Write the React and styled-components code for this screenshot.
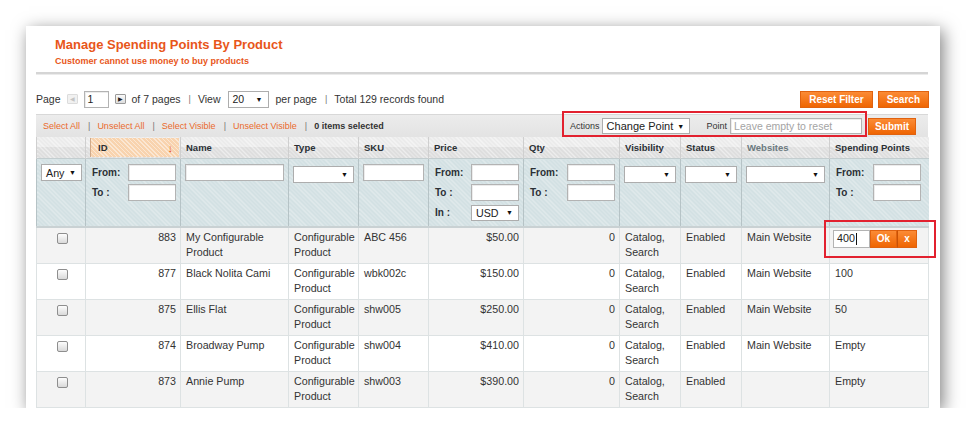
import React from 'react';
import styled, { createGlobalStyle } from 'styled-components';

const GlobalStyle = createGlobalStyle`
  html, body { margin: 0; padding: 0; background: #fff; }
  body { font-family: "Liberation Sans", Arial, sans-serif; color: #333; }
  * { box-sizing: border-box; }
`;

const ORANGE = '#e8561a';
const hatch = (light) =>
  `repeating-linear-gradient(45deg, ${light} 0 1px, transparent 1px 3px)`;

const Page = styled.div`
  padding: 26px 0 0 26px;
`;

const Panel = styled.div`
  width: 914px;
  height: 382px;
  background: #fff;
  box-shadow: 3px 4px 16px rgba(0, 0, 0, 0.5);
  overflow: hidden;
  padding: 0 12px 0 10px;
`;

const Head = styled.div`
  padding: 11px 0 0 19px;
  height: 46px;
`;

const Title = styled.h3`
  margin: 0;
  font-size: 13px;
  line-height: 16px;
  font-weight: bold;
  color: ${ORANGE};
`;

const Subtitle = styled.div`
  margin-top: 3px;
  font-size: 9px;
  line-height: 11px;
  font-weight: bold;
  color: ${ORANGE};
`;

const Rule = styled.div`
  height: 3px;
  background: #d5d5d5;
  border-bottom: 1px solid #ebebeb;
`;

const Toolbar = styled.div`
  display: flex;
  align-items: center;
  justify-content: space-between;
  height: 18px;
  margin-top: 15px;
  font-size: 10.5px;
  color: #333;
`;

const Pager = styled.div`
  display: flex;
  align-items: center;
`;

const Spacer = styled.span`
  width: ${(p) => p.$w}px;
`;

const ArrowBox = styled.span`
  display: inline-flex;
  align-items: center;
  justify-content: center;
  width: 11px;
  height: 10px;
  margin: 0 6px;
  border: 1px solid ${(p) => (p.$disabled ? '#dcdcdc' : '#9a9a9a')};
  background: ${(p) => (p.$disabled ? '#f1f1f1' : 'linear-gradient(#fafafa, #dedede)')};
  color: ${(p) => (p.$disabled ? '#c4c4c4' : '#222')};
  font-size: 6px;
  line-height: 1;
  border-radius: 1px;
`;

const TextBox = styled.span`
  display: inline-flex;
  align-items: center;
  width: ${(p) => p.$w}px;
  height: ${(p) => p.$h || 17}px;
  padding-left: 3px;
  background: #fff;
  border: 1px solid #b3b3b3;
  box-shadow: inset 1px 1px 0 #ececec;
  font-size: ${(p) => p.$fs || 10.7}px;
  font-weight: normal;
  color: ${(p) => (p.$placeholder ? '#a4a4a4' : '#222')};
  white-space: nowrap;
  overflow: hidden;
`;

const SelectBox = styled.span`
  display: inline-flex;
  align-items: center;
  justify-content: space-between;
  width: ${(p) => (p.$w ? `${p.$w}px` : '100%')};
  height: ${(p) => p.$h || 17}px;
  padding: 0 5px 0 4px;
  background: #fff;
  border: 1px solid #adadad;
  font-size: ${(p) => p.$fs || 10.7}px;
  font-weight: normal;
  color: #222;
  white-space: nowrap;
`;

const Caret = styled.span`
  font-size: 7px;
  color: #111;
  margin-left: 4px;
`;

const Sep = styled.span`
  margin: 0 7px 0 8px;
  color: #777;
  font-size: ${(p) => p.$fs || 9}px;
`;

const Btn = styled.button`
  height: 17px;
  padding: 0 ${(p) => p.$px ?? 8}px;
  margin-left: ${(p) => p.$ml || 0}px;
  border: 1px solid #e0620f;
  background: linear-gradient(#fb8b35, #ef6502);
  color: #fff;
  font-family: "Liberation Sans", Arial, sans-serif;
  font-size: 10px;
  font-weight: bold;
  line-height: 15px;
  cursor: pointer;
`;

const Buttons = styled.div`
  display: flex;
  gap: 5px;
  margin-right: -1px;
`;

const MassBar = styled.div`
  display: flex;
  align-items: center;
  height: 23px;
  margin-top: 6px;
  padding: 0 12px 0 7px;
  background: linear-gradient(#ececec, #e3e3e3);
  border-top: 1px solid #d8d8d8;
  font-size: 9px;
`;

const MassLink = styled.a`
  color: #ea6a2c;
  text-decoration: none;
`;

const Count = styled.strong`
  color: #333;
`;

const Annotated = styled.div`
  position: relative;
  display: flex;
  align-items: center;
  height: 16px;
  margin-left: auto;
`;

const Highlight = styled.span`
  position: absolute;
  pointer-events: none;
  top: ${(p) => p.$t}px;
  right: ${(p) => p.$r}px;
  bottom: ${(p) => p.$b}px;
  left: ${(p) => p.$l}px;
  border: 2px solid #e2212f;
`;

const SmallLabel = styled.span`
  font-size: 9px;
  color: #333;
  margin: ${(p) => p.$m || '0 2px 0 0'};
`;

const Grid = styled.table`
  width: 892px;
  table-layout: fixed;
  border-collapse: collapse;
  font-size: 10.7px;
`;

const HeadCell = styled.th`
  height: 21px;
  padding: 1px 1px 1px 4px;
  text-align: left;
  vertical-align: middle;
  background: ${hatch('rgba(255,255,255,0.45)')},
    linear-gradient(#ebebeb 0, #ebebeb 50%, #dedede 50%, #dedede 100%);
  border-left: 1px solid #cfcfcf;
  font-size: 9.5px;
  font-weight: bold;
  color: ${(p) => (p.$muted ? '#6c7a80' : '#2b3035')};
`;

const HeadLabel = styled.span`
  display: flex;
  align-items: center;
  justify-content: space-between;
  height: 19px;
  padding: 0 6px 0 ${(p) => (p.$sorted ? 7 : 1)}px;
  background: ${(p) =>
    p.$sorted ? `${hatch('rgba(255,255,255,0.45)')}, #f8d3ae` : 'transparent'};
  border-left: ${(p) => (p.$sorted ? '1px solid #cfa98a' : 'none')};
`;

const SortArrow = styled.span`
  color: ${ORANGE};
  font-size: 11px;
  font-weight: normal;
`;

const FilterRow = styled.tr`
  height: 68px;
`;

const FilterCell = styled.td`
  vertical-align: top;
  padding: 5px ${(p) => p.$pr || 4}px 0 4px;
  background: ${hatch('rgba(255,255,255,0.35)')}, #d2e0e3;
  border-left: 1px solid #b6c3c6;
  border-top: 1px solid #c3cdcf;
  border-bottom: 2px solid #c9d1d3;
`;

const RangeRow = styled.div`
  display: flex;
  align-items: center;
  justify-content: space-between;
  height: 17px;
  margin-bottom: 3px;
  padding-left: 2px;
  font-size: 10px;
  font-weight: bold;
  color: #2b3035;
`;

const Row = styled.tr`
  background: ${(p) => (p.$odd ? '#f3f3f3' : '#fff')};
`;

const Cell = styled.td`
  vertical-align: top;
  height: 35px;
  padding: 2px ${(p) => (p.$right ? 4 : 3)}px 3px 5px;
  line-height: 15px;
  text-align: ${(p) => (p.$right ? 'right' : p.$center ? 'center' : 'left')};
  border: 1px solid #dde2e3;
  color: #333;
`;

const Check = styled.input.attrs({ type: 'checkbox' })`
  appearance: none;
  width: 11px;
  height: 11px;
  margin: 3px 0 0 0;
  border: 1px solid #8e8e8e;
  border-radius: 2px;
  background: linear-gradient(#fdfdfd, #d9d9d9);
`;

const Editor = styled.div`
  position: relative;
  display: flex;
  width: 84px;
  height: 18px;
  margin-left: -2px;
`;

const EditInput = styled.span`
  display: flex;
  align-items: center;
  width: 37px;
  height: 18px;
  padding-left: 3px;
  background: #fff;
  border: 1px solid #b3b3b3;
  font-size: 10.7px;
  color: #222;
`;

const TextCaret = styled.span`
  display: inline-block;
  width: 1px;
  height: 12px;
  margin-left: 1px;
  background: #111;
`;

const EditBtn = styled(Btn)`
  height: 18px;
  width: ${(p) => p.$w}px;
  padding: 0;
  border-left-color: ${(p) => (p.$split ? '#c85104' : '#e0620f')};
`;

const rows = [
  { id: 883, name: 'My Configurable Product', sku: 'ABC 456', price: '$50.00', web: 'Main Website', sp: 'edit' },
  { id: 877, name: 'Black Nolita Cami', sku: 'wbk002c', price: '$150.00', web: 'Main Website', sp: '100' },
  { id: 875, name: 'Ellis Flat', sku: 'shw005', price: '$250.00', web: 'Main Website', sp: '50' },
  { id: 874, name: 'Broadway Pump', sku: 'shw004', price: '$410.00', web: 'Main Website', sp: 'Empty' },
  { id: 873, name: 'Annie Pump', sku: 'shw003', price: '$390.00', web: '', sp: 'Empty' },
];

const widths = [49, 95, 108, 70, 70, 95, 96, 61, 61, 88, 99];

const Range = ({ currency }) => (
  <>
    <RangeRow>
      From:
      <TextBox $w={48} />
    </RangeRow>
    <RangeRow>
      To :
      <TextBox $w={48} />
    </RangeRow>
    {currency && (
      <RangeRow>
        In :
        <SelectBox $w={48} $h={16}>
          USD<Caret>▼</Caret>
        </SelectBox>
      </RangeRow>
    )}
  </>
);

export default function App() {
  return (
    <>
      <GlobalStyle />
      <Page>
        <Panel>
          <Head>
            <Title>Manage Spending Points By Product</Title>
            <Subtitle>Customer cannot use money to buy products</Subtitle>
          </Head>
          <Rule />

          <Toolbar>
            <Pager>
              Page
              <ArrowBox $disabled>◀</ArrowBox>
              <TextBox $w={25} $h={17} $fs={10.5}>1</TextBox>
              <ArrowBox>▶</ArrowBox>
              of 7 pages
              <Sep $fs={9}>|</Sep>
              View
              <Spacer $w={7} />
              <SelectBox $w={41} $fs={10.5}>
                20<Caret>▼</Caret>
              </SelectBox>
              <Spacer $w={7} />
              per page
              <Sep $fs={9}>|</Sep>
              Total 129 records found
            </Pager>
            <Buttons>
              <Btn>Reset Filter</Btn>
              <Btn>Search</Btn>
            </Buttons>
          </Toolbar>

          <MassBar>
            <MassLink href="#">Select All</MassLink>
            <Sep>|</Sep>
            <MassLink href="#">Unselect All</MassLink>
            <Sep>|</Sep>
            <MassLink href="#">Select Visible</MassLink>
            <Sep>|</Sep>
            <MassLink href="#">Unselect Visible</MassLink>
            <Sep>|</Sep>
            <Count>0 items selected</Count>
            <Annotated>
              <SmallLabel>Actions</SmallLabel>
              <SelectBox $w={88} $h={16} $fs={11}>
                Change Point<Caret>▼</Caret>
              </SelectBox>
              <SmallLabel $m="0 3px 0 17px">Point</SmallLabel>
              <TextBox $w={132} $h={16} $fs={10.5} $placeholder>
                Leave empty to reset
              </TextBox>
              <Highlight $t={-7} $r={-5} $b={-3} $l={-8} />
            </Annotated>
            <Btn $ml={6} $px={6}>Submit</Btn>
          </MassBar>

          <Grid>
            <colgroup>
              {widths.map((w, i) => (
                <col key={i} style={{ width: w }} />
              ))}
            </colgroup>
            <thead>
              <tr>
                <HeadCell><HeadLabel /></HeadCell>
                <HeadCell>
                  <HeadLabel $sorted>
                    ID<SortArrow>↓</SortArrow>
                  </HeadLabel>
                </HeadCell>
                <HeadCell><HeadLabel>Name</HeadLabel></HeadCell>
                <HeadCell><HeadLabel>Type</HeadLabel></HeadCell>
                <HeadCell><HeadLabel>SKU</HeadLabel></HeadCell>
                <HeadCell><HeadLabel>Price</HeadLabel></HeadCell>
                <HeadCell><HeadLabel>Qty</HeadLabel></HeadCell>
                <HeadCell><HeadLabel>Visibility</HeadLabel></HeadCell>
                <HeadCell><HeadLabel>Status</HeadLabel></HeadCell>
                <HeadCell $muted><HeadLabel>Websites</HeadLabel></HeadCell>
                <HeadCell><HeadLabel>Spending Points</HeadLabel></HeadCell>
              </tr>
              <FilterRow>
                <FilterCell>
                  <SelectBox $w={41}>Any<Caret>▼</Caret></SelectBox>
                </FilterCell>
                <FilterCell><Range /></FilterCell>
                <FilterCell><TextBox $w={99} /></FilterCell>
                <FilterCell><SelectBox><span /><Caret>▼</Caret></SelectBox></FilterCell>
                <FilterCell><TextBox $w={61} /></FilterCell>
                <FilterCell><Range currency /></FilterCell>
                <FilterCell><Range /></FilterCell>
                <FilterCell><SelectBox><span /><Caret>▼</Caret></SelectBox></FilterCell>
                <FilterCell><SelectBox><span /><Caret>▼</Caret></SelectBox></FilterCell>
                <FilterCell><SelectBox><span /><Caret>▼</Caret></SelectBox></FilterCell>
                <FilterCell $pr={8}><Range /></FilterCell>
              </FilterRow>
            </thead>
            <tbody>
              {rows.map((r, i) => (
                <Row key={r.id} $odd={i % 2 === 0}>
                  <Cell $center><Check /></Cell>
                  <Cell $right>{r.id}</Cell>
                  <Cell>{r.name}</Cell>
                  <Cell>Configurable Product</Cell>
                  <Cell>{r.sku}</Cell>
                  <Cell $right>{r.price}</Cell>
                  <Cell $right>0</Cell>
                  <Cell>Catalog, Search</Cell>
                  <Cell>Enabled</Cell>
                  <Cell>{r.web}</Cell>
                  <Cell>
                    {r.sp === 'edit' ? (
                      <Editor>
                        <EditInput>400<TextCaret /></EditInput>
                        <EditBtn $w={27}>Ok</EditBtn>
                        <EditBtn $w={20} $split>x</EditBtn>
                        <Highlight $t={-10} $r={-19} $b={-10} $l={-9} />
                      </Editor>
                    ) : (
                      r.sp
                    )}
                  </Cell>
                </Row>
              ))}
              <Row>
                {widths.map((w, i) => (
                  <Cell key={i} />
                ))}
              </Row>
            </tbody>
          </Grid>
        </Panel>
      </Page>
    </>
  );
}
